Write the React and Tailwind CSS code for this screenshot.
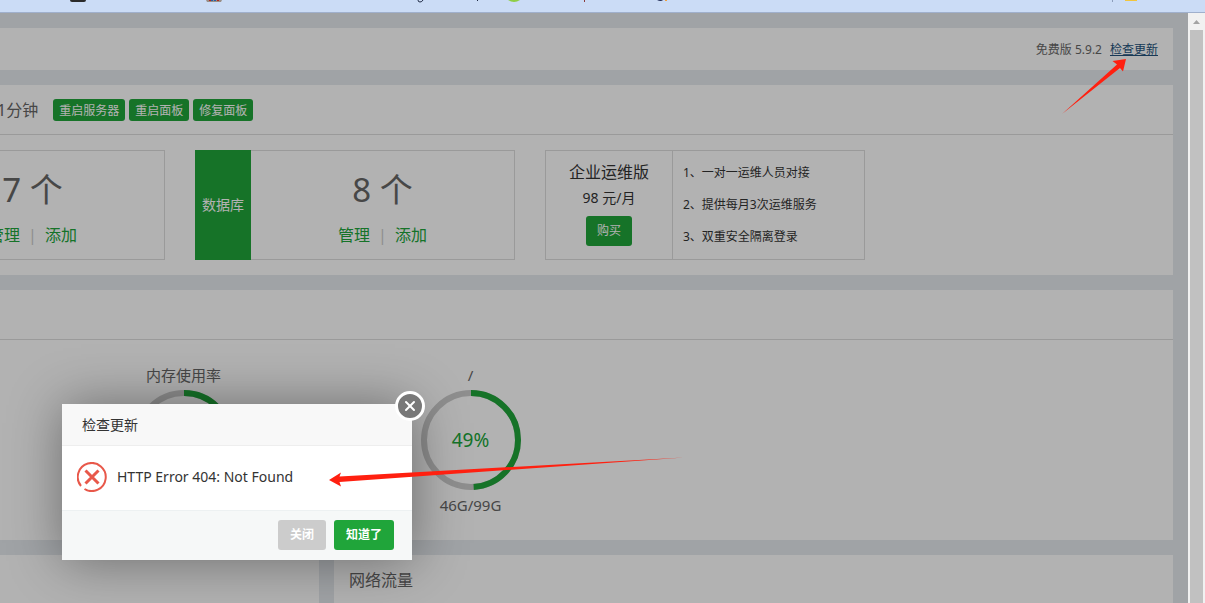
import { X } from "lucide-react";

const PLAN_ITEMS = ["1、一对一运维人员对接", "2、提供每月3次运维服务", "3、双重安全隔离登录"];

function BookmarkBar() {
  return (
    <div className="h-[13px] shrink-0 overflow-hidden border-b border-[#a0b0cc] bg-[#cbdcf6]">
      <svg width="1205" height="12" aria-hidden="true">
        <path d="M70 0h16q0 2-2 2H72q-2 0-2-2z" fill="#2a2a2a" />
        <path d="M206 0h16l-1 2h-14z" fill="#9a8f88" />
        <path d="M209 0h2v1h-2zM217 0h2v1h-2z" fill="#b3261e" />
        <path d="M211 0h2v1h-2zM214 0h2v1h-2z" fill="#2361a8" />
        <path d="M418 0q0 2 2 2t3-2" fill="none" stroke="#1f2a44" />
        <path d="M477 0h1v1h-1z" fill="#1f2a44" />
        <path d="M508 0h12q-6 4-12 0z" fill="#8fce45" />
        <path d="M584 0h1v2h-1z" fill="#8a3a3a" />
        <path d="M657 0h6q-2 2-6 0z" fill="#1f2a55" />
        <path d="M665 0h2v1h-2z" fill="#f0a040" />
        <path d="M1112 0h1v2h-1z" fill="#8c9dba" />
        <path d="M1125 0h12v1h-12z" fill="#f2c53d" />
      </svg>
    </div>
  );
}

function ScrollBar() {
  return (
    <div className="flex w-[17px] shrink-0 flex-col items-center bg-[#f1f1f1]">
      <div className="flex h-[17px] shrink-0 items-center">
        <svg width="7" height="4" aria-hidden="true">
          <path d="M0 4L3.5 0L7 4z" fill="#a3a3a3" />
        </svg>
      </div>
      <div className="w-[13px] flex-1 bg-[#c1c1c1]" />
    </div>
  );
}

function SmallButton({ children }) {
  return (
    <button type="button" className="h-[22px] rounded-[3px] bg-[#20a53a] px-[6px] pt-[2px] text-xs text-white">
      {children}
    </button>
  );
}

function CountCard({ title, count }) {
  return (
    <div className="flex h-[110px] shrink-0">
      {title && (
        <div className="flex w-14 items-center justify-center bg-[#20a53a] text-sm text-white">{title}</div>
      )}
      <div className="flex w-[264px] flex-col items-center border border-l-0 border-[#dddddd]">
        <div className="mt-4 text-[33px] leading-[46px]">{count} 个</div>
        <div className="mt-2 flex items-center gap-2 text-base leading-7">
          <a href="#manage" className="text-[#20a53a]">管理</a>
          <span className="text-[#cccccc]">|</span>
          <a href="#add" className="text-[#20a53a]">添加</a>
        </div>
      </div>
    </div>
  );
}

function PlanCard() {
  return (
    <div className="flex h-[110px] w-80 shrink-0 border border-[#dddddd] text-[#333333]">
      <div className="flex w-[127px] flex-col items-center border-r border-[#dddddd] pt-[7px]">
        <div className="text-base leading-7">企业运维版</div>
        <div className="text-sm leading-6">98 元/月</div>
        <button type="button" className="mt-[6px] h-[30px] w-[46px] rounded-[3px] bg-[#20a53a] text-xs text-white">
          购买
        </button>
      </div>
      <ul className="pt-[6px] pl-[10px] text-xs leading-8">
        {PLAN_ITEMS.map((item) => (
          <li key={item}>{item}</li>
        ))}
      </ul>
    </div>
  );
}

function Gauge({ label, percent, detail }) {
  const length = 2 * Math.PI * 47;

  return (
    <div className="flex w-[287px] shrink-0 flex-col items-center text-[15px] leading-[26px]">
      <div>{label}</div>
      <div className="mt-[2px] grid h-[100px] w-[100px] place-items-center">
        <svg viewBox="0 0 100 100" className="col-start-1 row-start-1 h-full w-full" aria-hidden="true">
          <circle cx="50" cy="50" r="47" fill="none" stroke="#cccccc" strokeWidth="6" />
          <circle
            cx="50"
            cy="50"
            r="47"
            fill="none"
            stroke="#20a53a"
            strokeWidth="6"
            strokeDasharray={`${(length * percent) / 100} ${length}`}
            transform="rotate(-90 50 50)"
          />
        </svg>
        {detail && <span className="col-start-1 row-start-1 text-[19px] text-[#20a53a]">{percent}%</span>}
      </div>
      <div className="mt-[2px]">{detail}</div>
    </div>
  );
}

function UpdateDialog() {
  return (
    <div
      role="dialog"
      aria-labelledby="dialog-title"
      className="absolute top-[391px] left-[62px] w-[350px] bg-white text-[#333333] shadow-[1px_1px_50px_rgba(0,0,0,0.4)]"
    >
      <h2 id="dialog-title" className="h-[42px] border-b border-[#eeeeee] bg-[#f8f8f8] pl-5 text-sm leading-[42px]">
        检查更新
      </h2>
      <button
        type="button"
        aria-label="关闭窗口"
        className="absolute -top-[13px] -right-[13px] flex h-[30px] w-[30px] items-center justify-center rounded-full border-[3px] border-white bg-[#787878] text-white"
      >
        <X size={16} strokeWidth={3} />
      </button>
      <div className="flex h-16 items-center gap-[10px] pb-[2px] pl-[15px] text-sm">
        <svg width="30" height="30" viewBox="0 0 30 30" fill="none" stroke="#e8584a" aria-hidden="true">
          <path d="M7.5 27A14 14 0 1 0 4 24" strokeWidth="2" />
          <path d="M8.500 8.500L21.500 21.500M21.500 8.500L8.500 21.500" strokeWidth="3" />
        </svg>
        <p>HTTP Error 404: Not Found</p>
      </div>
      <div className="flex h-[50px] justify-end gap-2 border-t border-[#edf1f2] bg-[#f6f8f8] pt-[9px] pr-[18px] text-xs font-bold text-white">
        <button type="button" className="h-[30px] w-12 rounded-[3px] bg-[#cccccc]">关闭</button>
        <button type="button" className="h-[30px] w-[60px] rounded-[3px] bg-[#20a53a]">知道了</button>
      </div>
    </div>
  );
}

function Arrows() {
  return (
    <>
      <svg className="pointer-events-none absolute top-11 right-[60px]" width="68" height="58" aria-hidden="true">
        <path d="M2 57L57 7.500L52.500 4L66 2L63 14.500L60 11z" fill="#ff2010" />
      </svg>
      <svg className="pointer-events-none absolute top-[443px] left-[328px]" width="358" height="34" aria-hidden="true">
        <path d="M1 24L13 16.500L11.500 20.500L356 1.500L11.500 26L13 30.500z" fill="#ff2010" />
      </svg>
    </>
  );
}

export default function App() {
  return (
    <div className="flex h-screen flex-col overflow-hidden bg-[#e5eaee] font-['Noto_Sans','Noto_Sans_CJK_SC',sans-serif] text-[#666666]">
      <BookmarkBar />
      <div className="flex min-h-0 flex-1">
        <div className="relative min-w-0 flex-1 overflow-hidden">
          <main className="flex flex-col gap-[15px] pt-[15px] pr-[15px]">
            <section className="flex h-[42px] items-center justify-end gap-2 bg-white pt-[2px] pr-[15px] text-xs">
              <span>免费版 5.9.2</span>
              <a href="#update" className="text-[#23527c] underline">检查更新</a>
            </section>

            <section className="overflow-hidden bg-white">
              <div className="flex h-[50px] items-center border-b border-[#dddddd]">
                <span className="mr-[15px] -ml-[3px] text-base">1分钟</span>
                <div className="flex gap-1">
                  <SmallButton>重启服务器</SmallButton>
                  <SmallButton>重启面板</SmallButton>
                  <SmallButton>修复面板</SmallButton>
                </div>
              </div>
              <div className="-ml-[99px] flex gap-[30px] py-[15px]">
                <CountCard count={7} />
                <CountCard title="数据库" count={8} />
                <PlanCard />
              </div>
            </section>

            <section className="h-[250px] bg-white">
              <div className="h-[50px] border-b border-[#dddddd]" />
              <div className="flex pt-[22px] pl-10">
                <Gauge label="内存使用率" percent={45} />
                <Gauge label="/" percent={49} detail="46G/99G" />
              </div>
            </section>

            <div className="flex gap-[15px]">
              <section className="h-[50px] w-[319px] bg-white" />
              <section className="h-[50px] flex-1 bg-white px-[15px] text-base leading-[50px]">网络流量</section>
            </div>
          </main>

          <div className="absolute inset-0 bg-black/30" />
          <UpdateDialog />
          <Arrows />
        </div>
        <ScrollBar />
      </div>
    </div>
  );
}
